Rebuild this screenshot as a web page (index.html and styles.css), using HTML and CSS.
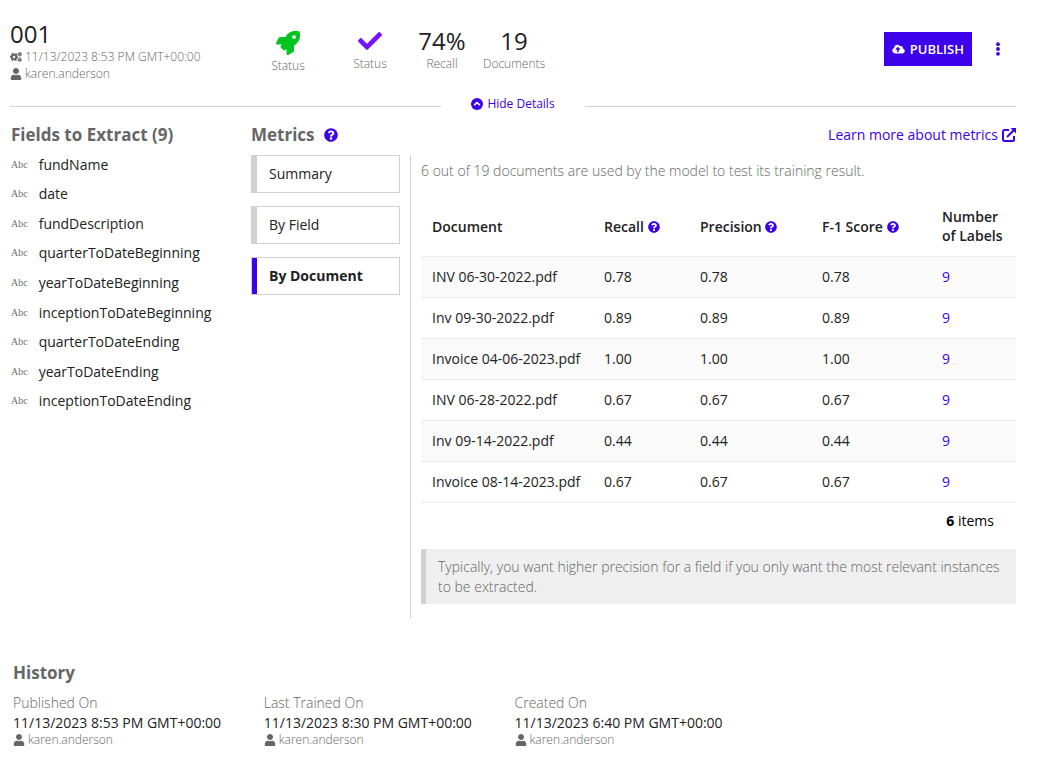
FILE: index.html
```html
<!DOCTYPE html>
<html lang="en">
<head>
<meta charset="utf-8">
<title>001 – Model details</title>
<link rel="stylesheet" href="styles.css">
</head>
<body>
<svg class="sprite" aria-hidden="true">
  <symbol id="user" viewBox="0 0 448 512"><path d="M224 256c70.7 0 128-57.3 128-128S294.7 0 224 0 96 57.3 96 128s57.3 128 128 128zm89.600 32h-16.700c-22.200 10.200-46.900 16-72.900 16s-50.600-5.800-72.900-16h-16.700C60.200 288 0 348.200 0 422.400V464c0 26.500 21.500 48 48 48h352c26.500 0 48-21.500 48-48v-41.600c0-74.200-60.200-134.400-134.400-134.400z"/></symbol>
  <symbol id="help" viewBox="0 0 512 512"><path d="M504 256c0 136.997-111.043 248-248 248S8 392.997 8 256C8 119.083 119.043 8 256 8s248 111.083 248 248zM262.655 90c-54.497 0-89.255 22.957-116.549 63.758-3.536 5.286-2.353 12.415 2.715 16.258l34.699 26.310c5.205 3.947 12.621 3.008 16.665-2.122 17.864-22.658 30.113-35.797 57.303-35.797 20.429 0 45.698 13.148 45.698 32.958 0 14.976-12.363 22.667-32.534 33.976C247.128 238.528 216 254.941 216 296v4c0 6.627 5.373 12 12 12h56c6.627 0 12-5.373 12-12v-1.333c0-28.462 83.186-29.647 83.186-106.667 0-58.002-60.165-102-116.531-102zM256 338c-25.365 0-46 20.635-46 46 0 25.364 20.635 46 46 46s46-20.636 46-46c0-25.365-20.635-46-46-46z"/></symbol>
  <symbol id="cogs" viewBox="0 0 24 20">
    <g fill="none" stroke="currentColor">
      <circle cx="8" cy="10" r="4.500" stroke-width="4.200"/>
      <circle cx="8" cy="10" r="7" stroke-width="2.800" stroke-dasharray="4 3.330" stroke-dashoffset="2"/>
      <circle cx="19.500" cy="4.500" r="2.400" stroke-width="2.400"/>
      <circle cx="19.500" cy="4.500" r="4" stroke-width="1.600" stroke-dasharray="2.200 1.989"/>
      <circle cx="19.500" cy="15.500" r="2.400" stroke-width="2.400"/>
      <circle cx="19.500" cy="15.500" r="4" stroke-width="1.600" stroke-dasharray="2.200 1.989"/>
    </g>
  </symbol>
</svg>

<main class="page">
  <header class="header">
    <div class="title">
      <h1>001</h1>
      <p class="meta"><svg class="icon-sm"><use href="#cogs"/></svg>11/13/2023 8:53 PM GMT+00:00</p>
      <p class="meta"><svg class="icon-sm"><use href="#user"/></svg>karen.anderson</p>
    </div>
    <div class="stats">
      <div class="stat stat-deploy">
        <div class="stat-value"><svg class="rocket" viewBox="0 0 512 512"><path d="M505.120 19.094c-1.189-5.531-6.658-11-12.207-12.188C460.716 0 435.507 0 410.407 0 307.175 0 245.269 55.203 199.052 128H94.838c-16.348.016-35.557 11.875-42.887 26.484L2.516 253.297A28.400 28.400 0 0 0 0 264a24 24 0 0 0 24.006 24h103.810l-22.474 22.469c-11.365 11.361-12.996 32.258 0 45.250l50.904 50.906c11.156 11.188 32.156 13.156 45.277 0l22.475-22.469V488a24 24 0 0 0 24.006 24 28.560 28.560 0 0 0 10.707-2.516l98.728-49.390c14.629-7.297 26.508-26.500 26.508-42.860V312.797c72.598-46.313 128.035-108.406 128.035-211.094.093-25.203.093-50.406-6.862-82.609zM384.040 168A40 40 0 1 1 424.050 128a40 40 0 0 1-40.010 40z"/></svg></div>
        <div class="stat-label">Status</div>
      </div>
      <div class="stat">
        <div class="stat-value"><svg class="check" viewBox="0 0 512 512"><path d="M173.898 439.404l-166.400-166.400c-9.997-9.997-9.997-26.206 0-36.204l36.203-36.204c9.997-9.998 26.207-9.998 36.204 0L192 312.690 432.095 72.596c9.997-9.997 26.207-9.997 36.204 0l36.203 36.204c9.997 9.997 9.997 26.206 0 36.204l-294.400 294.401c-9.998 9.997-26.207 9.997-36.204-.001z"/></svg></div>
        <div class="stat-label">Status</div>
      </div>
      <div class="stat"><div class="stat-value">74%</div><div class="stat-label">Recall</div></div>
      <div class="stat"><div class="stat-value">19</div><div class="stat-label">Documents</div></div>
    </div>
    <div class="actions">
      <button class="publish" type="button"><svg class="cloud" viewBox="0 0 640 512"><path d="M537.600 226.600c4.100-10.700 6.400-22.400 6.400-34.600 0-53-43-96-96-96-19.700 0-38.100 6-53.300 16.200C367 64.200 315.300 32 256 32c-88.400 0-160 71.600-160 160 0 2.700.1 5.400.2 8.100C40.200 219.800 0 273.200 0 336c0 79.500 64.500 144 144 144h368c70.700 0 128-57.300 128-128 0-61.900-44-113.600-102.400-125.400zM393.400 288H328v112c0 8.800-7.200 16-16 16h-48c-8.800 0-16-7.200-16-16V288h-65.400c-14.300 0-21.400-17.200-11.300-27.300l105.400-105.400c6.200-6.200 16.400-6.200 22.600 0l105.400 105.400c10.100 10.100 2.900 27.300-11.300 27.300z"/></svg>PUBLISH</button>
      <button class="more" type="button" aria-label="More actions"><svg viewBox="0 0 6 14"><circle cx="3" cy="2.200" r="1.900"/><circle cx="3" cy="7" r="1.900"/><circle cx="3" cy="11.800" r="1.900"/></svg></button>
    </div>
  </header>

  <div class="divider">
    <button class="toggle" type="button"><svg class="icon-md" viewBox="0 0 12 12"><circle cx="6" cy="6" r="6"/><path class="cut" d="M3.200 7.200 6 4.500l2.800 2.700"/></svg>Hide Details</button>
  </div>

  <div class="details">
    <section class="fields">
      <h2>Fields to Extract (9)</h2>
      <ul>
        <li><span class="type">Abc</span>fundName</li>
        <li><span class="type">Abc</span>date</li>
        <li><span class="type">Abc</span>fundDescription</li>
        <li><span class="type">Abc</span>quarterToDateBeginning</li>
        <li><span class="type">Abc</span>yearToDateBeginning</li>
        <li><span class="type">Abc</span>inceptionToDateBeginning</li>
        <li><span class="type">Abc</span>quarterToDateEnding</li>
        <li><span class="type">Abc</span>yearToDateEnding</li>
        <li><span class="type">Abc</span>inceptionToDateEnding</li>
      </ul>
    </section>

    <section class="metrics">
      <div class="metrics-head">
        <h2>Metrics</h2>
        <svg class="icon-lg"><use href="#help"/></svg>
        <a class="learn" href="#">Learn more about metrics<svg class="external" viewBox="0 0 14 14"><path class="line" d="M7 2H2.500Q1 2 1 3.500v8Q1 13 2.500 13h8q1.500 0 1.500-1.500V8M5 9l7-7"/><path d="M8.500 0H14v5.500z"/></svg></a>
      </div>
      <div class="metrics-body">
        <nav class="tabs">
          <button class="tab" type="button">Summary</button>
          <button class="tab" type="button">By Field</button>
          <button class="tab active" type="button">By Document</button>
        </nav>
        <div class="panel">
          <p class="intro">6 out of 19 documents are used by the model to test its training result.</p>
          <table>
            <colgroup><col class="c-doc"><col class="c-recall"><col class="c-precision"><col class="c-score"><col class="c-labels"></colgroup>
            <thead>
              <tr>
                <th>Document</th>
                <th>Recall <svg class="icon-md"><use href="#help"/></svg></th>
                <th>Precision <svg class="icon-md"><use href="#help"/></svg></th>
                <th>F-1 Score <svg class="icon-md"><use href="#help"/></svg></th>
                <th>Number<br>of Labels</th>
              </tr>
            </thead>
            <tbody>
              <tr><td>INV 06-30-2022.pdf</td><td>0.78</td><td>0.78</td><td>0.78</td><td><a href="#">9</a></td></tr>
              <tr><td>Inv 09-30-2022.pdf</td><td>0.89</td><td>0.89</td><td>0.89</td><td><a href="#">9</a></td></tr>
              <tr><td>Invoice 04-06-2023.pdf</td><td>1.00</td><td>1.00</td><td>1.00</td><td><a href="#">9</a></td></tr>
              <tr><td>INV 06-28-2022.pdf</td><td>0.67</td><td>0.67</td><td>0.67</td><td><a href="#">9</a></td></tr>
              <tr><td>Inv 09-14-2022.pdf</td><td>0.44</td><td>0.44</td><td>0.44</td><td><a href="#">9</a></td></tr>
              <tr><td>Invoice 08-14-2023.pdf</td><td>0.67</td><td>0.67</td><td>0.67</td><td><a href="#">9</a></td></tr>
            </tbody>
          </table>
          <p class="count"><b>6</b> items</p>
          <p class="note">Typically, you want higher precision for a field if you only want the most relevant instances to be extracted.</p>
        </div>
      </div>
    </section>
  </div>

  <section class="history">
    <h2>History</h2>
    <div class="events">
      <div class="event"><p class="event-label">Published On</p><p>11/13/2023 8:53 PM GMT+00:00</p><p class="meta"><svg class="icon-sm"><use href="#user"/></svg>karen.anderson</p></div>
      <div class="event"><p class="event-label">Last Trained On</p><p>11/13/2023 8:30 PM GMT+00:00</p><p class="meta"><svg class="icon-sm"><use href="#user"/></svg>karen.anderson</p></div>
      <div class="event"><p class="event-label">Created On</p><p>11/13/2023 6:40 PM GMT+00:00</p><p class="meta"><svg class="icon-sm"><use href="#user"/></svg>karen.anderson</p></div>
    </div>
  </section>
</main>
</body>
</html>
```
FILE: styles.css
```css
* { box-sizing: border-box; }

body {
  margin: 0;
  background: #fff;
  color: #212121;
  font: 14px/20px "Open Sans", "Noto Sans", sans-serif;
}

h1, h2, p, ul { margin: 0; padding: 0; }
ul { list-style: none; }
a { color: #3d00eb; text-decoration: none; }
svg { fill: currentColor; flex: none; }
button { font: inherit; color: inherit; cursor: pointer; }

.sprite { display: none; }
.icon-sm { width: 12px; height: 12px; }
.icon-md { width: 12px; height: 12px; }
.icon-lg { width: 14px; height: 14px; color: #3d00eb; }

h2 { font-size: 17px; font-weight: 700; line-height: 20px; color: #666; }

.page { padding: 20px 21px 24px 10px; }

.header {
  display: grid;
  grid-template-columns: 232px 1fr auto;
  align-items: start;
}
h1 { font-size: 24px; font-weight: 400; line-height: 28px; }
.meta {
  display: flex;
  align-items: center;
  gap: 3px;
  font-size: 12px;
  font-weight: 300;
  line-height: 17px;
  color: #666;
}

.stats { display: grid; grid-template-columns: 92px 72px 72px 72px; padding-top: 6px; }
.stat { text-align: center; }
.stat-deploy { padding-top: 2px; }
.stat-value {
  display: flex;
  align-items: center;
  justify-content: center;
  height: 30px;
  font-size: 24px;
}
.stat-label { font-size: 12px; font-weight: 300; line-height: 16px; color: #666; }
.rocket { width: 24px; height: 24px; color: #00c41f; }
.check { width: 24px; height: 24px; color: #7514ff; }

.actions { display: flex; align-items: center; padding-top: 12px; gap: 19px; }
.publish {
  display: flex;
  align-items: center;
  gap: 5px;
  height: 34px;
  padding: 0 8px;
  border: 0;
  background: #3d00eb;
  color: #fff;
  font-size: 13px;
  font-weight: 600;
}
.cloud { width: 13px; height: 10px; }
.more { padding: 4px; margin-right: 11px; border: 0; background: none; color: #3d00eb; }
.more svg { display: block; width: 6px; height: 14px; }

.divider { display: flex; align-items: center; gap: 30px; margin-top: 12px; }
.divider::before, .divider::after { content: ""; flex: 1; height: 1px; margin-top: 5px; background: #d1d1d1; }
.toggle {
  display: flex;
  align-items: center;
  gap: 4px;
  padding: 0;
  border: 0;
  background: none;
  color: #3d00eb;
  font-size: 12px;
}
.cut { fill: none; stroke: #fff; stroke-width: 1.6; }

.details { display: grid; grid-template-columns: 241px 1fr; margin-top: 11px; }
.fields h2 { padding-left: 1px; }
.fields ul { display: grid; grid-auto-rows: 1fr; height: 266px; margin-top: 5px; }
.fields li { display: flex; align-items: center; gap: 11px; padding-left: 1px; }
.type { font: 10px/16px "Liberation Serif", serif; color: #707070; }

.metrics-head { display: flex; align-items: center; gap: 9px; }
.learn { display: flex; align-items: center; gap: 4px; margin-left: auto; }
.external { width: 14px; height: 14px; }
.line { fill: none; stroke: currentColor; stroke-width: 2; }

.metrics-body { display: grid; grid-template-columns: 149px 1fr; gap: 10px; margin-top: 10px; }
.tabs { display: flex; flex-direction: column; gap: 13px; }
.tab {
  height: 38px;
  padding: 0 12px;
  border: 1px solid #d1d1d1;
  background: #fff;
  box-shadow: inset 5px 0 #d1d1d1;
  text-align: left;
  text-indent: 5px;
}
.active { box-shadow: inset 5px 0 #3d00eb; font-weight: 700; }

.panel { padding: 6px 0 14px 10px; border-left: 1px solid #d1d1d1; }
.intro { color: #666; font-weight: 300; }

table { width: 100%; margin-top: 16px; border-collapse: collapse; table-layout: fixed; }
.c-doc { width: 172px; }
.c-recall { width: 96px; }
.c-precision { width: 122px; }
.c-score { width: 120px; }
th, td { padding: 0 0 0 11px; text-align: left; }
th { height: 59px; font-weight: 600; line-height: 19px; }
th svg { color: #3d00eb; vertical-align: -1px; }
td { height: 41px; border-top: 1px solid #ebebeb; border-bottom: 1px solid #ebebeb; }
tbody tr:nth-child(odd) { background: #fafafa; }

.count { padding: 8px 22px 18px 0; text-align: right; color: #000; }
.note {
  padding: 8px 12px 7px;
  border-left: 5px solid #d1d1d1;
  background: #efefef;
  color: #666;
  font-weight: 300;
}

.history { margin-top: 45px; padding-left: 3px; }
.events { display: grid; grid-template-columns: repeat(4, 1fr); margin-top: 10px; }
.event-label { color: #666; font-weight: 300; }
.event .meta { line-height: 14px; }
```
